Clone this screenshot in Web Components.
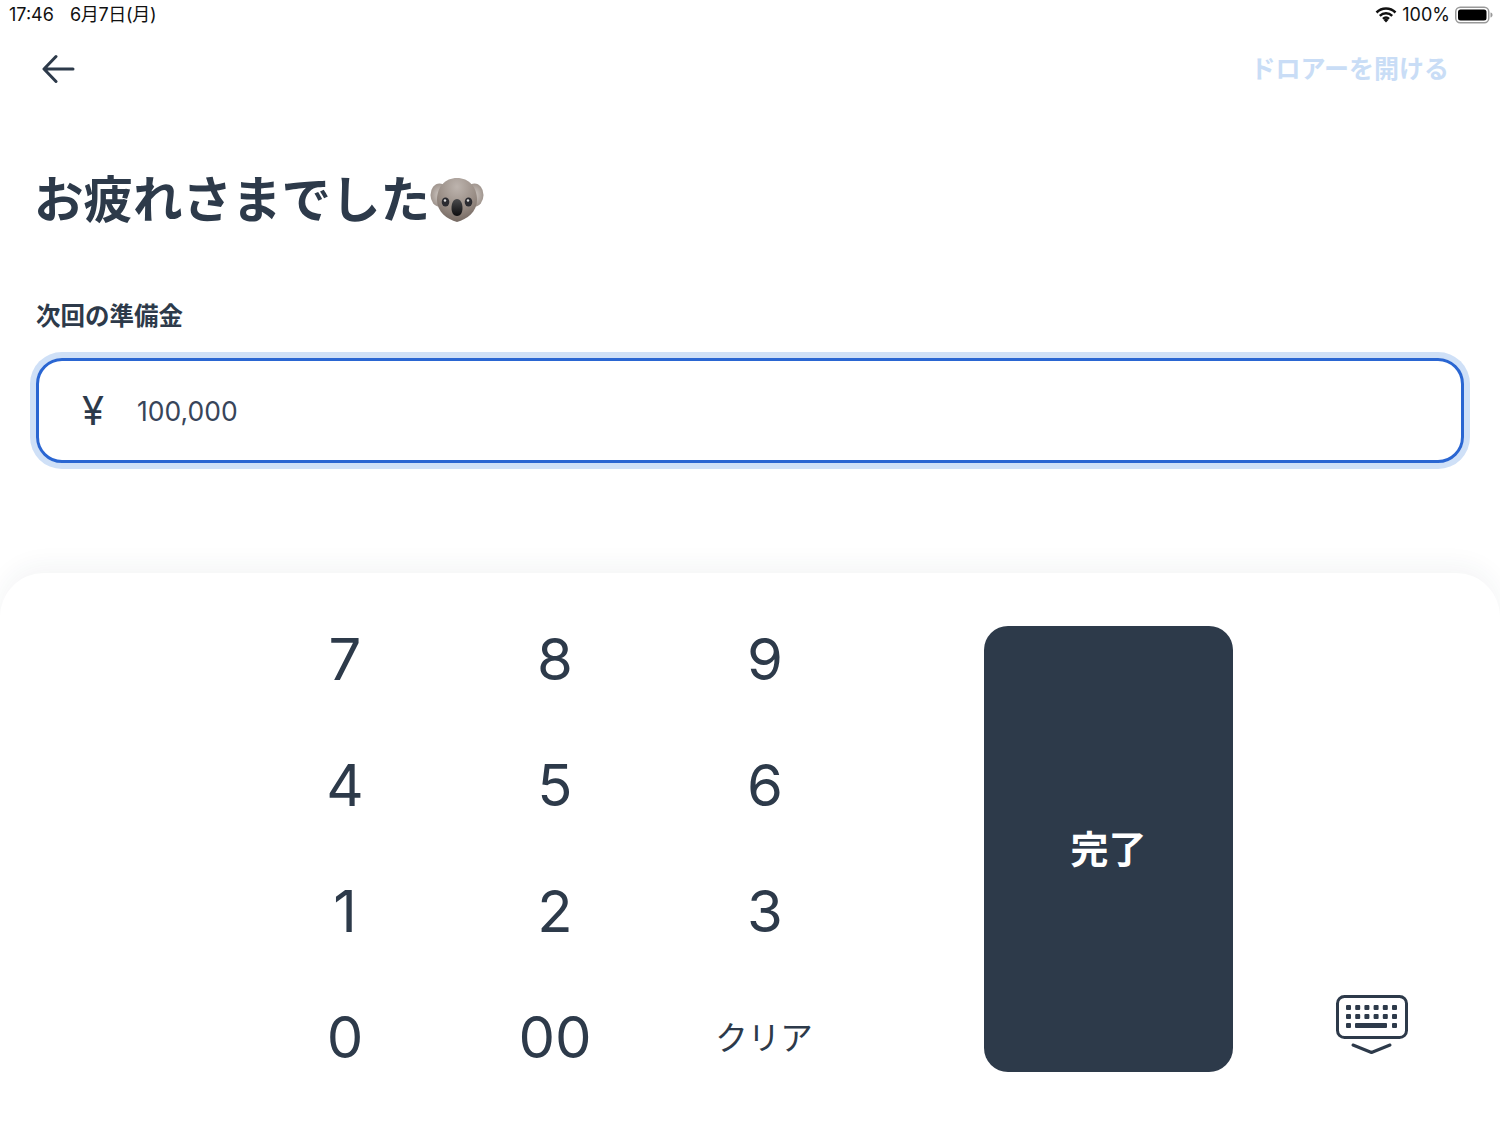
<!DOCTYPE html>
<html lang="ja">
<head>
<meta charset="utf-8">
<title>お疲れさまでした</title>
<style>
  html, body { margin: 0; height: 100%; background: #fff; }
  body { width: 1500px; height: 1125px; overflow: hidden; font-family: "Inter", "Noto Sans CJK JP", sans-serif; color: #2d3a4a; }
</style>
</head>
<body>
<closing-screen></closing-screen>

<script>
const JP = `"Inter", "Noto Sans CJK JP", sans-serif`;

class StatusBar extends HTMLElement {
  constructor() {
    super();
    this.attachShadow({ mode: 'open' });
    this.shadowRoot.innerHTML = `
      <style>
        :host { display: flex; align-items: center; justify-content: space-between; height: 28px; padding: 1px 7px 0 9px; box-sizing: border-box; font: 400 18px/27px ${JP}; color: #111; }
        .left { display: flex; align-items: baseline; gap: 16px; }
        .date { letter-spacing: -.3px; }
        .right { display: flex; align-items: center; gap: 5px; }
        svg { display: block; }
      </style>
      <div class="left"><span>17:46</span><span class="date">6月7日(月)</span></div>
      <div class="right">
        <svg width="22" height="17" viewBox="0 0 22 17">
          <path d="M1.500 6.500a13.500 13.500 0 0 1 19 0M4.800 9.800a9 9 0 0 1 12.400 0M8 12.800a4.400 4.400 0 0 1 6 0" fill="none" stroke="#111" stroke-width="2.500"/>
          <path d="M11 16.600 8.600 14a3.400 3.400 0 0 1 4.800 0z" fill="#111"/>
        </svg>
        <span>100%</span>
        <svg width="38" height="18" viewBox="0 0 38 18">
          <rect x=".75" y="1.250" width="33" height="15.500" rx="4.500" fill="none" stroke="#999" stroke-width="1.500"/>
          <rect x="3" y="3.500" width="28.500" height="11" rx="2.500" fill="#000"/>
          <path d="M35.500 6.500c1.200.3 2 1.200 2 2.500s-.8 2.200-2 2.500z" fill="#999"/>
        </svg>
      </div>`;
  }
}
customElements.define('status-bar', StatusBar);

class TopNav extends HTMLElement {
  constructor() {
    super();
    this.attachShadow({ mode: 'open' });
    this.shadowRoot.innerHTML = `
      <style>
        :host { display: flex; align-items: center; justify-content: space-between; height: 80px; padding: 0 51px 0 42px; }
        svg { display: block; }
        .drawer { font: 700 25px/30px ${JP}; color: #c9ddf6; margin-top: 1px; }
      </style>
      <svg width="34" height="30" viewBox="0 0 34 30">
        <path d="M31 16H2.500M14 3.500 2 16 14 28.500" fill="none" stroke="#2d3a4a" stroke-width="3" stroke-linecap="round" stroke-linejoin="round"/>
      </svg>
      <span class="drawer">ドロアーを開ける</span>`;
  }
}
customElements.define('top-nav', TopNav);

class KoalaEmoji extends HTMLElement {
  constructor() {
    super();
    this.attachShadow({ mode: 'open' });
    this.shadowRoot.innerHTML = `
      <style>:host { display: inline-block; width: 54px; height: 48px; } svg { display: block; }</style>
      <svg width="54" height="48" viewBox="0 0 54 48">
        <defs>
          <radialGradient id="f" cx=".5" cy=".2" r=".85"><stop offset="0" stop-color="#bdb4ae"/><stop offset=".6" stop-color="#978b83"/><stop offset="1" stop-color="#6f635c"/></radialGradient>
          <radialGradient id="e" cx=".5" cy=".5" r=".5"><stop offset="0" stop-color="#cfc8c3"/><stop offset="1" stop-color="#a0958e"/></radialGradient>
          <linearGradient id="n" x1="0" y1="0" x2="0" y2="1"><stop offset="0" stop-color="#4a4a4c"/><stop offset="1" stop-color="#0d0d0f"/></linearGradient>
        </defs>
        <ellipse cx="9.500" cy="19" rx="9" ry="11.500" fill="url(#e)"/>
        <ellipse cx="44.500" cy="19" rx="9" ry="11.500" fill="url(#e)"/>
        <path d="M27 2C39 2 47 11 47 24 47 36 37 43 27 46 17 43 7 36 7 24 7 11 15 2 27 2Z" fill="url(#f)"/>
        <ellipse cx="15.500" cy="26" rx="3.800" ry="4.600" fill="#2b2b30"/><circle cx="15" cy="24.500" r="1.200" fill="#ddd"/>
        <ellipse cx="38.500" cy="26" rx="3.800" ry="4.600" fill="#2b2b30"/><circle cx="38" cy="24.500" r="1.200" fill="#ddd"/>
        <path d="M27 23c3.500 0 5.500 4 5.500 9 0 5-2.200 8-5.500 8s-5.500-3-5.500-8c0-5 2-9 5.500-9Z" fill="url(#n)"/>
      </svg>`;
  }
}
customElements.define('koala-emoji', KoalaEmoji);

class AmountField extends HTMLElement {
  constructor() {
    super();
    this.attachShadow({ mode: 'open' });
    this.shadowRoot.innerHTML = `
      <style>
        :host { display: block; }
        .label { font: 700 24.500px/32px ${JP}; color: #2d3a4a; margin-bottom: 26px; }
        .box { display: flex; align-items: center; box-sizing: border-box; height: 105px; border: 3px solid #2a66d2; border-radius: 26px; box-shadow: 0 0 0 6px #cfe0f7; padding-left: 43px; color: #2d3a4a; }
        .yen { width: 55px; font: 400 40px "Inter", sans-serif; }
        .val { font: 400 26.500px "Inter", sans-serif; color: #38455a; padding-top: 1px; }
      </style>
      <div class="label"><slot name="label"></slot></div>
      <div class="box"><span class="yen">¥</span><span class="val"><slot></slot></span></div>`;
  }
}
customElements.define('amount-field', AmountField);

class KeyPad extends HTMLElement {
  constructor() {
    super();
    this.attachShadow({ mode: 'open' });
    const keys = ['7','8','9','4','5','6','1','2','3','0','00','クリア'];
    this.shadowRoot.innerHTML = `
      <style>
        :host { display: grid; grid-template-columns: repeat(3, 210px); grid-auto-rows: 126px; }
        div { display: flex; align-items: center; justify-content: center; font: 400 58px "Inter", sans-serif; color: #2d3a4a; }
        div.word { font: 400 32.500px ${JP}; padding-bottom: 4px; box-sizing: border-box; margin-left: -2px; }
      </style>
      ${keys.map(k => `<div class="${k.length > 2 ? 'word' : ''}">${k}</div>`).join('')}`;
  }
}
customElements.define('key-pad', KeyPad);

class KeyboardSheet extends HTMLElement {
  constructor() {
    super();
    this.attachShadow({ mode: 'open' });
    let dots = '';
    for (const y of [10, 19]) {
      for (let i = 0; i < 6; i++) dots += `<rect x="${10 + i * 9.200}" y="${y}" width="5" height="5" rx="1"/>`;
    }
    this.shadowRoot.innerHTML = `
      <style>
        :host { display: flex; box-sizing: border-box; height: 552px; border-radius: 44px 44px 0 0; background: #fff; box-shadow: 0 -8px 24px rgba(45,58,74,.05); padding: 23px 92px 0 240px; }
        .done { box-sizing: border-box; width: 249px; height: 446px; margin: 30px 0 0 114px; padding-bottom: 5px; display: flex; align-items: center; justify-content: center; background: #2d3a4a; color: #fff; border-radius: 24px; font: 700 38px ${JP}; }
        .kb { margin: 399px 0 0 auto; width: 72px; height: 60px; display: block; }
        key-pad { align-self: flex-start; }
      </style>
      <key-pad></key-pad>
      <div class="done">完了</div>
      <svg class="kb" viewBox="0 0 72 60" fill="#2d3a4a">
        <rect x="1.500" y="1.500" width="69" height="41" rx="7" fill="none" stroke="#2d3a4a" stroke-width="3"/>
        ${dots}
        <rect x="10" y="28" width="5" height="5" rx="1"/><rect x="56" y="28" width="5" height="5" rx="1"/>
        <rect x="19" y="28" width="32" height="5" rx="1"/>
        <path d="M17 50 35.500 57.500 54 50" fill="none" stroke="#2d3a4a" stroke-width="3" stroke-linecap="round" stroke-linejoin="round"/>
      </svg>`;
  }
}
customElements.define('keyboard-sheet', KeyboardSheet);

class ClosingScreen extends HTMLElement {
  constructor() {
    super();
    this.attachShadow({ mode: 'open' });
    this.shadowRoot.innerHTML = `
      <style>
        :host { display: flex; flex-direction: column; height: 1125px; }
        main { flex: 1; padding: 0 36px; }
        h1 { display: flex; align-items: center; margin: 52px 0 0 -2px; font: 700 49.500px/80px ${JP}; color: #2d3a4a; height: 80px; }
        amount-field { margin-top: 60px; }
      </style>
      <status-bar></status-bar>
      <top-nav></top-nav>
      <main>
        <h1>お疲れさまでした<koala-emoji></koala-emoji></h1>
        <amount-field><span slot="label">次回の準備金</span>100,000</amount-field>
      </main>
      <keyboard-sheet></keyboard-sheet>`;
  }
}
customElements.define('closing-screen', ClosingScreen);
</script>
</body>
</html>
